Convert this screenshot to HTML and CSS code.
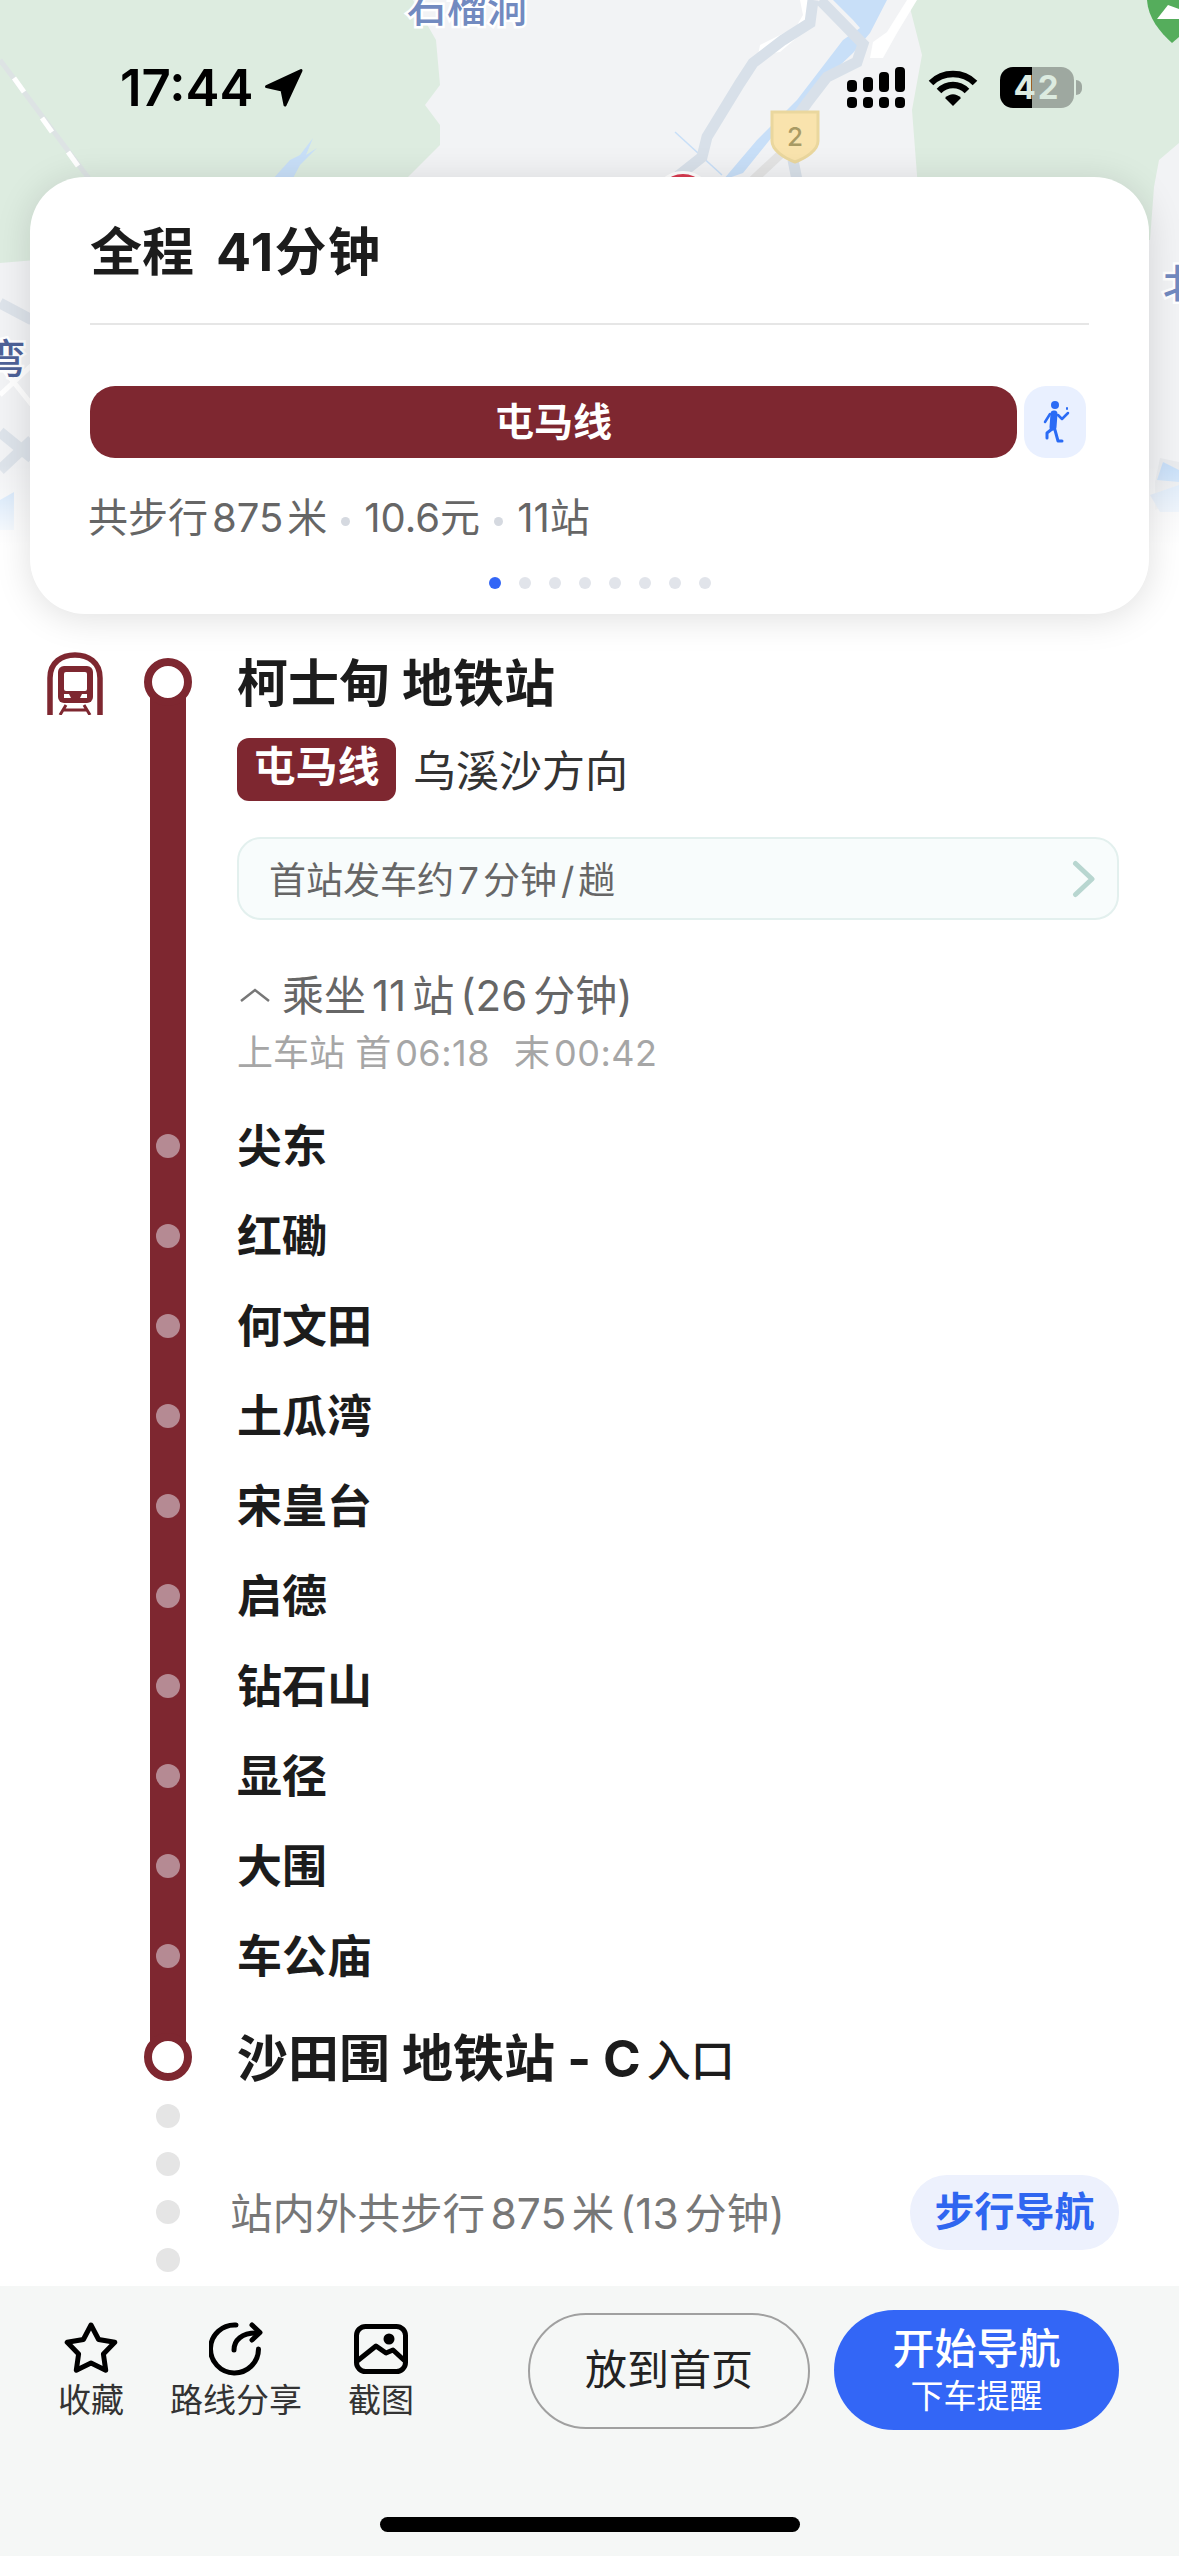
FILE: index.html
```html
<!DOCTYPE html>
<html lang="zh-CN">
<head>
    <meta charset="UTF-8">
    <title>路线详情</title>
    <link rel="stylesheet" href="styles.css">
</head>
<body>
<div class="screen">

    <!-- map behind the card -->
    <svg class="map" viewBox="0 0 1179 600" width="1179" height="600">
        <defs>
            <linearGradient id="mapFade" x1="0" y1="0" x2="0" y2="1">
                <stop offset="0" stop-color="#fff" stop-opacity="0"/>
                <stop offset="1" stop-color="#fff" stop-opacity="1"/>
            </linearGradient>
        </defs>
        <rect width="1179" height="600" fill="#f2f3f5"/>
        <path d="M0 0H413L436 40L440 85L425 105L440 125L440 145L395 190V230L0 263Z" fill="#ddece0"/>
        <path d="M908 0L922 55L912 110L922 240H1150L1154 187L1159 160L1179 143V0Z" fill="#ddece0"/>
        <path d="M272 180L290 160L300 155L313 138L306 155L317 148L300 165L292 180Z" fill="#c8dff8"/>
        <path d="M833 0H887L870 33L853 53L817 87L780 127L743 173L723 180L757 140L797 100L843 40L860 28L853 20Z" fill="#c8dff8"/>
        <path d="M675 132L722 175" fill="none" stroke="#c8dff8" stroke-width="1.5"/>
        <path d="M800 0L803 15L796 27L760 45L758 55L780 52L800 35L812 20L810 0Z" fill="#fff"/>
        <path d="M907 0L887 32L873 42L870 58L883 58L897 33L917 0Z" fill="#fff"/>
        <path d="M820 0L863 44L857 62L827 77L807 103L795 120M793 160L797 180M813 0L810 23L783 40L753 63L740 83L707 137L702 157L678 176" fill="none" stroke="#d8e0e9" stroke-width="11"/>
        <path d="M753 180L782 153" fill="none" stroke="#e4e4e4" stroke-width="9"/>
        <path d="M0 60L90 180" fill="none" stroke="#dde3e4" stroke-width="5"/>
        <path d="M14 78L24 92M42 118L52 132M68 152L78 166" fill="none" stroke="#fff" stroke-width="5"/>
        <path d="M0 303L32 320M0 432L32 458M0 470L32 440" fill="none" stroke="#dde3ea" stroke-width="11"/>
        <path d="M0 395L32 365M0 365L32 405" fill="none" stroke="#fff" stroke-width="5"/>
        <path d="M1155 482L1160 458L1179 462V500L1155 510Z" fill="#e9ebee"/>
        <path d="M1157 480L1163 462L1179 470V482Z" fill="#c8dff8"/>
        <path d="M1150 495L1179 485V512L1160 512Z" fill="#d8e7f8"/>
        <path d="M0 500L14 492V530L0 530Z" fill="#c8dff8"/>
        <rect y="465" width="1179" height="80" fill="url(#mapFade)"/>
        <rect y="545" width="1179" height="55" fill="#fff"/>
        <circle cx="683" cy="202" r="31" fill="#fff"/>
        <circle cx="683" cy="202" r="28" fill="#d8394f"/>
        <path d="M772 112H818V141C818 150 806 158 795 162C784 158 772 150 772 141Z" fill="#f9e3ad" stroke="#ead79e" stroke-width="3"/>
        <text class="map-shield" x="795" y="146" text-anchor="middle">2</text>
        <path d="M1147 0C1148 18 1160 32 1172 43L1179 37V0Z" fill="#55ad5c"/>
        <path d="M1157 19L1168 5L1179 9V19Z" fill="#fff"/>
        <text class="map-label" x="407" y="22">石榴洞</text>
        <text class="map-label map-label-dark" x="-14" y="373">弯</text>
        <text class="map-label" x="1163" y="298">北</text>
    </svg>

    <div class="status">
        <span class="time">17:44</span>
        <svg class="loc" viewBox="0 0 40 40" width="40" height="40"><path d="M2.5 18.5L37 2.5L21 37L18 22Z" fill="#000" stroke="#000" stroke-width="3" stroke-linejoin="round"/></svg>
        <svg class="signal" viewBox="0 0 58 41" width="58" height="41">
            <rect x="0" y="13" width="10" height="12" rx="4"/>
            <rect x="16" y="10" width="10" height="15" rx="4"/>
            <rect x="32" y="5" width="10" height="20" rx="4"/>
            <rect x="48" y="0" width="10" height="25" rx="4"/>
            <rect x="0" y="30" width="10" height="11" rx="4"/>
            <rect x="16" y="30" width="10" height="11" rx="4"/>
            <rect x="32" y="30" width="10" height="11" rx="4"/>
            <rect x="48" y="30" width="10" height="11" rx="4"/>
        </svg>
        <svg class="wifi" viewBox="0 0 50 37" width="50" height="37">
            <path d="M3 14C15 2 35 2 47 14M11 22C19 14 31 14 39 22" fill="none" stroke="#000" stroke-width="6.5"/>
            <path d="M17 29C22 24 28 24 33 29L25 37Z"/>
        </svg>
        <div class="battery">42</div>
        <div class="battery-cap"></div>
    </div>

    <section class="card">
        <h1 class="card-title">全程<span class="card-time">41分钟</span></h1>
        <div class="divider"></div>
        <div class="segments">
            <div class="seg-line">屯马线</div>
            <div class="seg-walk">
                <svg viewBox="0 0 62 72" width="62" height="72">
                    <circle cx="31" cy="19" r="4" fill="#2a6bf5"/>
                    <g fill="none" stroke="#2a6bf5" stroke-linecap="round" stroke-linejoin="round">
                        <path d="M30 28L29 41" stroke-width="7"/>
                        <path d="M26 28L21 36M34 29L38 33L44 27" stroke-width="2.5"/>
                        <path d="M28 43L23 47L23 52" stroke-width="3"/>
                        <path d="M31 44L34 55H38" stroke-width="3"/>
                        <path d="M43 22V23" stroke-width="2"/>
                    </g>
                </svg>
            </div>
        </div>
        <p class="summary">共步行<span class="n">875</span>米<i class="sep"></i>10.6元<i class="sep"></i>11站</p>
        <div class="pager">
            <i class="on"></i><i></i><i></i><i></i><i></i><i></i><i></i><i></i>
        </div>
    </section>

    <div class="route">
        <div class="route-bar"></div>
        <svg class="train" viewBox="0 0 56 63" width="56" height="63">
            <path d="M3 63V26C3 10 15 3 28 3C41 3 53 10 53 26V63" fill="none" stroke="#7e2730" stroke-width="5.5"/>
            <rect x="11" y="14" width="35" height="37" rx="6" fill="#7e2730"/>
            <rect x="17" y="20" width="23" height="19" rx="2" fill="#fff"/>
            <path d="M17 42H22L24 46H17ZM40 42H35L33 46H40Z" fill="#fff"/>
            <path d="M19 53L13 63M37 53L43 63M16 58H40" fill="none" stroke="#7e2730" stroke-width="3"/>
        </svg>

        <div class="stop stop-big">
            <span class="node"><i class="ring"></i></span>
            <h2 class="stop-name">柯士甸 地铁站</h2>
        </div>

        <div class="detail">
            <div class="line-row">
                <span class="line-tag">屯马线</span>
                <span class="line-dir">乌溪沙方向</span>
            </div>
            <div class="freq">
                <span class="freq-text">首站发车约<span class="n">7</span>分钟<span class="n">/</span>趟</span>
                <svg viewBox="0 0 24 38" width="24" height="38"><path d="M3.5 3.5L20 19L3.5 34.5" fill="none" stroke="#b8d6d0" stroke-width="5" stroke-linecap="round" stroke-linejoin="round"/></svg>
            </div>
            <div class="ride">
                <svg viewBox="0 0 32 16" width="32" height="16"><path d="M2 14L16 3L30 14" fill="none" stroke="#777" stroke-width="2.5"/></svg>
                <span class="ride-text">乘坐<span class="n">11</span>站<span class="n">(26</span>分钟)</span>
            </div>
            <div class="times">上车站 首<span class="n">06:18</span><span class="times-gap">末</span><span class="n">00:42</span></div>
        </div>

        <ul class="stations">
            <li class="stop"><span class="node"><i class="dot"></i></span><span class="stop-text">尖东</span></li>
            <li class="stop"><span class="node"><i class="dot"></i></span><span class="stop-text">红磡</span></li>
            <li class="stop"><span class="node"><i class="dot"></i></span><span class="stop-text">何文田</span></li>
            <li class="stop"><span class="node"><i class="dot"></i></span><span class="stop-text">土瓜湾</span></li>
            <li class="stop"><span class="node"><i class="dot"></i></span><span class="stop-text">宋皇台</span></li>
            <li class="stop"><span class="node"><i class="dot"></i></span><span class="stop-text">启德</span></li>
            <li class="stop"><span class="node"><i class="dot"></i></span><span class="stop-text">钻石山</span></li>
            <li class="stop"><span class="node"><i class="dot"></i></span><span class="stop-text">显径</span></li>
            <li class="stop"><span class="node"><i class="dot"></i></span><span class="stop-text">大围</span></li>
            <li class="stop"><span class="node"><i class="dot"></i></span><span class="stop-text">车公庙</span></li>
        </ul>

        <div class="stop stop-big stop-last">
            <span class="node"><i class="ring"></i></span>
            <h2 class="stop-name">沙田围 地铁站 - C<span class="entry">入口</span></h2>
        </div>
    </div>

    <div class="walk">
        <div class="walk-dots"><i></i><i></i><i></i><i></i></div>
        <div class="walk-text">站内外共步行<span class="n">875</span>米<span class="n">(13</span>分钟)</div>
        <div class="walk-btn">步行导航</div>
    </div>

    <footer class="footer">
        <div class="footer-row">
            <div class="tools">
                <div class="tool">
                    <svg viewBox="0 0 54 54" width="54" height="54"><path d="M27 3L34.6 17.5L50.8 20.3L39.4 32L41.7 48.2L27 41L12.3 48.2L14.6 32L3.2 20.3L19.4 17.5Z" fill="none" stroke="#000" stroke-width="5" stroke-linejoin="round"/></svg>
                    <span>收藏</span>
                </div>
                <div class="tool">
                    <svg viewBox="0 0 54 54" width="54" height="54" fill="none" stroke="#000" stroke-width="5" stroke-linecap="round" stroke-linejoin="round"><path d="M27 3A24 24 0 1 0 49.5 27"/><path d="M25 28C25 18 33 11 47 11"/><path d="M43 3L51 10.5L43 18"/></svg>
                    <span>路线分享</span>
                </div>
                <div class="tool">
                    <svg viewBox="0 0 54 54" width="54" height="54" fill="none" stroke="#000" stroke-width="5" stroke-linejoin="round"><rect x="2.5" y="4.5" width="49" height="45" rx="9"/><path d="M2 40L22 24L32 31L39 28L52 40"/><circle cx="35" cy="17" r="5.5" fill="#000" stroke="none"/></svg>
                    <span>截图</span>
                </div>
            </div>
            <div class="btn-home">放到首页</div>
            <div class="btn-go">
                <span class="go-main">开始导航</span>
                <span class="go-sub">下车提醒</span>
            </div>
        </div>
        <div class="home-bar"></div>
    </footer>
</div>
</body>
</html>
```

FILE: styles.css
```css
* {
    box-sizing: border-box;
}

body {
    margin: 0;
    background-color: #fff;
    font-family: Inter, "Noto Sans CJK SC", sans-serif;
}

h1, h2, p, ul {
    margin: 0;
    padding: 0;
}

li {
    list-style: none;
}

.screen {
    position: relative;
    width: 1179px;
    height: 2556px;
    overflow: hidden;
    display: flex;
    flex-direction: column;
}

.n {
    margin: 0 4px;
}

/* map */
.map {
    position: absolute;
    top: 0;
    left: 0;
}

.map-label {
    font-size: 40px;
    font-weight: 500;
    fill: #728ac0;
    stroke: #fff;
    stroke-width: 5px;
    paint-order: stroke;
}

.map-label-dark {
    fill: #4e6298;
}

.map-shield {
    font-size: 26px;
    font-weight: 500;
    fill: #a89a64;
}

/* status bar */
.status {
    position: relative;
    height: 177px;
    flex-shrink: 0;
    display: flex;
    align-items: flex-start;
    padding: 67px 0 0 120px;
}

.time {
    width: 144px;
    font-size: 51px;
    line-height: 41px;
    font-weight: 600;
    color: #000;
}

.loc {
    margin-top: 1px;
}

.signal {
    margin-left: 543px;
}

.wifi {
    margin: 2px 0 0 23px;
}

.battery {
    width: 74px;
    height: 41px;
    margin-left: 22px;
    border-radius: 13px;
    background: linear-gradient(90deg, #000 43%, #9ea8a0 43%);
    color: #dcebe0;
    font-size: 33px;
    font-weight: 700;
    line-height: 41px;
    text-align: center;
    letter-spacing: 2px;
}

.battery-cap {
    width: 6px;
    height: 15px;
    margin: 13px 0 0 2px;
    border-radius: 0 8px 8px 0;
    background-color: #9ea8a0;
}

/* summary card */
.card {
    position: relative;
    flex-shrink: 0;
    margin: 0 30px;
    height: 437px;
    padding: 46px 60px 0;
    background-color: #fff;
    border-radius: 55px;
    box-shadow: 0 4px 36px rgba(0, 0, 0, 0.13);
}

.card-title {
    height: 60px;
    font-size: 52px;
    line-height: 60px;
    font-weight: 700;
    color: #1c1c1c;
}

.card-time {
    margin-left: 22px;
    letter-spacing: 1.5px;
}

.divider {
    height: 2px;
    margin-top: 40px;
    background-color: #e6e6e6;
}

.segments {
    display: flex;
    gap: 7px;
    margin-top: 61px;
    padding-right: 3px;
}

.seg-line {
    flex: 1;
    height: 72px;
    border-radius: 25px;
    background-color: #7e2730;
    color: #fff;
    font-size: 39px;
    font-weight: 700;
    line-height: 72px;
    text-align: center;
}

.seg-walk {
    width: 62px;
    height: 72px;
    border-radius: 22px;
    background-color: #e9f0ff;
}

.summary {
    height: 50px;
    margin: 35px 0 0 -2px;
    font-size: 40px;
    line-height: 50px;
    color: #666;
    white-space: nowrap;
}

.sep {
    display: inline-block;
    width: 9px;
    height: 9px;
    margin: 0 14px;
    border-radius: 50%;
    background-color: #d5d9e0;
    vertical-align: middle;
}

.pager {
    display: flex;
    justify-content: center;
    gap: 18px;
    margin-top: 34px;
    padding-left: 20px;
}

.pager i {
    width: 12px;
    height: 12px;
    border-radius: 50%;
    background-color: #e1e4ea;
}

.pager .on {
    background-color: #3366f6;
}

/* route */
.route {
    position: relative;
    margin-top: 34px;
}

.route-bar {
    position: absolute;
    left: 150px;
    top: 34px;
    width: 36px;
    height: 1375px;
    background-color: #7e2730;
}

.train {
    position: absolute;
    left: 47px;
    top: 4px;
}

.stop {
    position: relative;
    display: flex;
    align-items: center;
    height: 90px;
    padding-left: 144px;
    font-size: 45px;
    font-weight: 700;
    color: #1c1c1c;
}

.stop-text {
    margin-bottom: 6px;
}

.stop-big {
    height: 68px;
}

.stop-last {
    margin-top: 22px;
}

.node {
    width: 48px;
    margin-right: 45px;
    display: flex;
    justify-content: center;
    flex-shrink: 0;
}

.ring {
    width: 48px;
    height: 48px;
    border: 8px solid #7e2730;
    border-radius: 50%;
    background-color: #fff;
}

.dot {
    width: 24px;
    height: 24px;
    border-radius: 50%;
    background-color: #b58a93;
}

.stop-name {
    margin-bottom: 5px;
    font-size: 51px;
    font-weight: 700;
    white-space: nowrap;
}

.entry {
    margin-left: 6px;
    font-weight: 500;
    font-size: 44px;
}

.detail {
    position: relative;
    margin-top: 22px;
    padding-left: 237px;
    padding-right: 60px;
}

.line-row {
    display: flex;
    align-items: center;
    height: 63px;
}

.line-tag {
    width: 159px;
    height: 63px;
    border-radius: 12px;
    background-color: #7e2730;
    color: #fff;
    font-size: 42px;
    font-weight: 700;
    line-height: 58px;
    text-align: center;
}

.line-dir {
    margin: 0 0 4px 17px;
    font-size: 43px;
    color: #333;
}

.freq {
    display: flex;
    align-items: center;
    justify-content: space-between;
    height: 83px;
    margin-top: 36px;
    padding: 0 21px 0 30px;
    border: 2px solid #e3f0ee;
    border-radius: 24px;
    background-color: #f8fcfc;
    font-size: 37px;
    color: #666;
}

.freq-text {
    margin-bottom: 2px;
}

.ride {
    display: flex;
    align-items: center;
    height: 50px;
    margin-top: 50px;
    font-size: 42px;
    color: #666;
}

.ride svg {
    margin: 0 11px 0 2px;
}

.ride-text {
    margin-bottom: 6px;
    white-space: nowrap;
}

.ride-text .n {
    margin: 0 6px;
}

.times {
    height: 40px;
    margin-top: 13px;
    font-size: 36px;
    line-height: 40px;
    color: #a6a6a6;
    white-space: nowrap;
}

.times .n {
    letter-spacing: 0.5px;
}

.times-gap {
    margin-left: 20px;
}

.stations {
    position: relative;
    margin-top: 28px;
}

/* walk section */
.walk {
    display: flex;
    align-items: center;
    height: 168px;
    margin-top: 13px;
    padding: 0 60px 0 156px;
    flex-shrink: 0;
}

.walk-dots {
    display: flex;
    flex-direction: column;
    gap: 24px;
    width: 24px;
    flex-shrink: 0;
}

.walk-dots i {
    width: 24px;
    height: 24px;
    border-radius: 50%;
    background-color: #e5e5e5;
}

.walk-text {
    margin: 44px 0 0 50px;
    font-size: 42.5px;
    color: #777;
    white-space: nowrap;
}

.walk-text .n {
    margin: 0 5.5px;
}

.walk-btn {
    margin: 48px 0 0 auto;
    width: 209px;
    height: 75px;
    border-radius: 37px;
    background-color: #edf1fd;
    color: #2f66f0;
    font-size: 40px;
    font-weight: 700;
    line-height: 73px;
    text-align: center;
}

/* footer */
.footer {
    position: absolute;
    left: 0;
    right: 0;
    bottom: 0;
    height: 270px;
    padding: 24px 60px 0 58px;
    background-color: #f5f7f6;
}

.footer-row {
    display: flex;
    align-items: flex-start;
}

.tools {
    display: flex;
    gap: 46px;
    margin-top: 12px;
}

.tool {
    display: flex;
    flex-direction: column;
    align-items: center;
    font-size: 33px;
    line-height: 40px;
    color: #333;
    white-space: nowrap;
}

.tool svg {
    margin-bottom: 4px;
}

.btn-home {
    width: 282px;
    height: 116px;
    margin: 3px 0 0 auto;
    border: 2px solid #a0a0a0;
    border-radius: 58px;
    font-size: 42px;
    line-height: 110px;
    text-align: center;
    color: #222;
}

.btn-go {
    width: 285px;
    height: 120px;
    margin-left: 24px;
    border-radius: 60px;
    background-color: #3366f6;
    color: #fff;
    display: flex;
    flex-direction: column;
    align-items: center;
    padding-top: 12px;
}

.go-main {
    font-size: 42px;
    line-height: 54px;
    font-weight: 500;
}

.go-sub {
    font-size: 33px;
    line-height: 40px;
}

.home-bar {
    width: 420px;
    height: 15px;
    margin: 87px 0 0 322px;
    border-radius: 8px;
    background-color: #000;
}
```
